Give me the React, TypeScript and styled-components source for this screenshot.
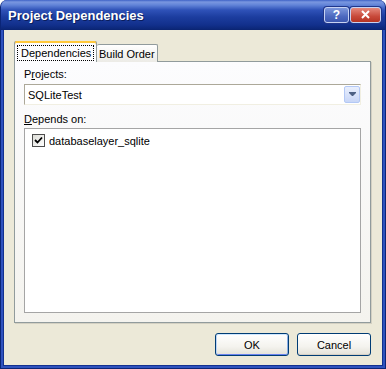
import React from 'react';
import styled, { createGlobalStyle } from 'styled-components';

const Global = createGlobalStyle`
  html, body { margin: 0; padding: 0; background: #ffffff; }
  body {
    width: 386px; height: 369px; overflow: hidden;
    font-family: "Liberation Sans", Arial, sans-serif;
    font-size: 11px; color: #000;
  }
  * { box-sizing: border-box; }
`;

const Window = styled.div`
  width: 386px;
  height: 369px;
  display: flex;
  flex-direction: column;
  border: 1px solid #0b2577;
  border-top: 0;
  border-radius: 7px 7px 0 0;
  overflow: hidden;
  background: #2f52bd;
`;

const TitleBar = styled.div`
  height: 30px;
  flex: none;
  display: flex;
  align-items: center;
  padding: 0 4px 0 6px;
  background: linear-gradient(
    to bottom,
    #3f62c6 0px,
    #7a97e0 2px,
    #6284d8 5px,
    #2f52b8 10px,
    #1c3d9f 17px,
    #12308c 25px,
    #0c2778 29px,
    #0a2370 30px
  );
`;

const Title = styled.div`
  flex: 1;
  color: #ffffff;
  font-family: "Liberation Sans", Arial, sans-serif;
  font-weight: bold;
  font-size: 13px;
  padding-left: 1px;
  text-shadow: 1px 1px 0 #0a1d5c;
`;

const CaptionButtons = styled.div`
  display: flex;
  gap: 1px;
  margin-top: -1px;
`;

const CaptionButton = styled.div<{ $variant: 'help' | 'close' }>`
  height: 16px;
  width: ${(p) => (p.$variant === 'close' ? '31px' : '25px')};
  border: 1px solid #c7d2f2;
  border-radius: 3px;
  display: flex;
  align-items: center;
  justify-content: center;
  color: #ffffff;
  font-weight: bold;
  font-size: 12px;
  box-shadow: 0 0 0 1px #20368a;
  background: ${(p) =>
    p.$variant === 'close'
      ? 'linear-gradient(to bottom, #e5887c, #c8493a 60%, #b53424)'
      : 'linear-gradient(to bottom, #7d97dc, #4d69c0 60%, #3c57b0)'};
`;

const Client = styled.div`
  flex: 1;
  margin: 0 2px 2px 2px;
  border: 1px solid #13318f;
  border-top: 0;
  background: #ece9d8;
  display: flex;
  flex-direction: column;
  padding: 11px 11px 9px 10px;
`;

const TabStrip = styled.div`
  height: 21px;
  display: flex;
  align-items: flex-end;
  margin-bottom: -1px;
  position: relative;
  z-index: 1;
`;

const Tab = styled.div<{ $active?: boolean }>`
  display: flex;
  align-items: center;
  border: 1px solid #919b9c;
  border-bottom: 0;
  border-radius: 2px 2px 0 0;
  ${(p) =>
    p.$active
      ? `
    width: 83px;
    height: 21px;
    background: #fcfcfe;
    border-top: 0;
    box-shadow: inset 0 2px 0 #ffc83c, inset 0 1px 0 #e68b2c;
    padding: 3px 2px 1px 2px;
  `
      : `
    width: 61px;
    height: 18px;
    background: linear-gradient(to bottom, #ffffff, #ecebe6);
    padding-left: 2px;
    border-left: 0;
  `}
`;

const FocusRect = styled.div`
  flex: 1;
  height: 16px;
  border: 1px dotted #000;
  display: flex;
  align-items: center;
  padding-left: 3px;
`;

const Panel = styled.div`
  flex: 1;
  border: 1px solid #919b9c;
  background: linear-gradient(to bottom, #fcfcfe, #f4f3ee);
  box-shadow: 1px 1px 0 #d3d0c2;
  padding: 6px 9px 9px 9px;
  display: flex;
  flex-direction: column;
`;

const Label = styled.div<{ $gapTop?: number }>`
  height: 13px;
  line-height: 13px;
  margin-top: ${(p) => p.$gapTop ?? 0}px;
  margin-bottom: ${(p) => (p.$gapTop ? 2 : 3)}px;
  u { text-decoration: underline; }
`;

const Combo = styled.div`
  height: 21px;
  display: flex;
  align-items: stretch;
  background: #ffffff;
  border: 1px solid;
  border-color: #aca899 #f1efe2 #f1efe2 #aca899;
  padding: 1px 0 1px 3px;
`;

const ComboText = styled.div`
  flex: 1;
  display: flex;
  align-items: center;
`;

const DropButton = styled.div`
  width: 16px;
  border: 1px solid #b3c8f5;
  border-radius: 2px;
  background: linear-gradient(to bottom, #e9effd, #c8d6f7);
  display: flex;
  align-items: center;
  justify-content: center;
`;

const ListBox = styled.div`
  flex: 1;
  background: #ffffff;
  border: 1px solid #a5a5a5;
  padding: 5px 7px;
`;

const ListItem = styled.div`
  display: flex;
  align-items: center;
  gap: 4px;
  height: 13px;
`;

const CheckBox = styled.div`
  width: 13px;
  height: 13px;
  border: 1px solid #4d4d4d;
  background: linear-gradient(135deg, #dcdcd6, #ffffff);
  display: flex;
  align-items: center;
  justify-content: center;
`;

const Footer = styled.div`
  display: flex;
  justify-content: flex-end;
  gap: 8px;
  margin-top: 10px;
`;

const Button = styled.div<{ $default?: boolean }>`
  width: 74px;
  height: 23px;
  border: 1px solid #003c74;
  border-radius: 3px;
  display: flex;
  align-items: center;
  justify-content: center;
  background: linear-gradient(to bottom, #ffffff, #f4f3ee 60%, #e3e1d8);
  box-shadow: ${(p) =>
    p.$default
      ? 'inset 0 1px 0 #cee7ff, inset 1px 0 0 #bcd4f6, inset -1px 0 0 #89ade4, inset 0 -1px 0 #6982ee'
      : 'inset 0 -1px 0 #d6d0c5'};
`;

export default function App() {
  return (
    <>
      <Global />
      <Window>
        <TitleBar>
          <Title>Project Dependencies</Title>
          <CaptionButtons>
            <CaptionButton $variant="help">?</CaptionButton>
            <CaptionButton $variant="close">
              <svg width="9" height="9" viewBox="0 0 9 9">
                <path d="M1 1 L8 8 M8 1 L1 8" stroke="#fff" strokeWidth="2" />
              </svg>
            </CaptionButton>
          </CaptionButtons>
        </TitleBar>
        <Client>
          <TabStrip>
            <Tab $active>
              <FocusRect>Dependencies</FocusRect>
            </Tab>
            <Tab>Build Order</Tab>
          </TabStrip>
          <Panel>
            <Label>
              P<u>r</u>ojects:
            </Label>
            <Combo>
              <ComboText>SQLiteTest</ComboText>
              <DropButton>
                <svg width="7" height="5" viewBox="0 0 7 5">
                  <path d="M0 0 H7 V1 L4 4 H3 L0 1 Z" fill="#4d6185" />
                </svg>
              </DropButton>
            </Combo>
            <Label $gapTop={8}>
              <u>D</u>epends on:
            </Label>
            <ListBox>
              <ListItem>
                <CheckBox>
                  <svg width="9" height="9" viewBox="0 0 9 9">
                    <path d="M1 4 L3.5 6.5 L8 1.5" stroke="#000" strokeWidth="1.8" fill="none" />
                  </svg>
                </CheckBox>
                databaselayer_sqlite
              </ListItem>
            </ListBox>
          </Panel>
          <Footer>
            <Button $default>OK</Button>
            <Button>Cancel</Button>
          </Footer>
        </Client>
      </Window>
    </>
  );
}
